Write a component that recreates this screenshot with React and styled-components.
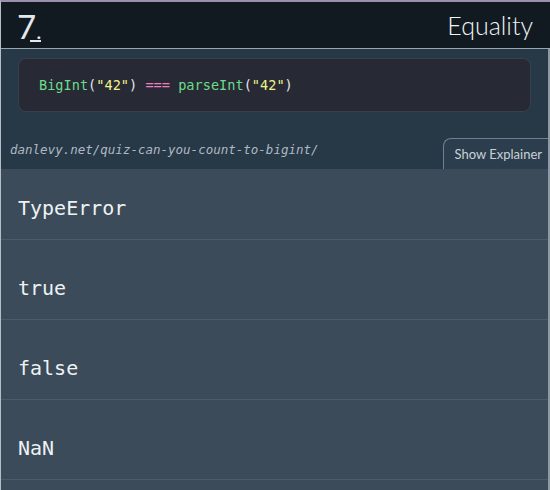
import React from 'react'
import styled, { createGlobalStyle } from 'styled-components'

const GlobalStyle = createGlobalStyle`
    html, body {
        margin: 0;
        padding: 0;
        background: #3b4b59;
    }
    * { box-sizing: border-box; }
`

const Page = styled.div`
    width: 550px;
    height: 490px;
    overflow: hidden;
    border-top: 2px solid #9b8fb0;
    border-left: 1px solid #b6bec4;
    display: flex;
    flex-direction: column;
`

const Header = styled.header`
    height: 47px;
    background: #121a21;
    border-bottom: 1px solid #9aa5ad;
    display: flex;
    align-items: center;
    justify-content: space-between;
    padding: 0 17px 0 16px;
    font-family: Lato, "Noto Sans", sans-serif;
    color: #e3e8ec;
`

const Logo = styled.div`
    font-size: 33px;
    font-weight: 400;
    line-height: 1;
    padding-top: 3px;
`

const Dot = styled.span`
    display: inline-block;
    font-size: 22px;
    line-height: 0.75;
    padding-left: 6px;
    margin-left: -6px;
    border-bottom: 2px solid #e3e8ec;
`

const Title = styled.h1`
    margin: 0;
    font-size: 25px;
    font-weight: 300;
    color: #f0f3f5;
`

const Body = styled.div`
    flex: 1;
    display: flex;
    flex-direction: column;
    border-right: 2px solid #8d99a3;
`

const Question = styled.div`
    background: #273847;
    padding: 9px 17px 0 17px;
`

const CodeBlock = styled.pre`
    margin: 0;
    height: 54px;
    background: #272934;
    border: 1px solid #384050;
    border-radius: 8px;
    padding: 0 20px;
    display: flex;
    align-items: center;
    font-family: "DejaVu Sans Mono", monospace;
    font-size: 13.6px;
    color: #e6e6ea;
`

const Code = styled.code`
    font-family: inherit;
    white-space: pre;
`

const Tok = styled.span`
    color: ${p => p.$c};
`

const LinkRow = styled.div`
    height: 57px;
    display: flex;
    align-items: flex-end;
    justify-content: space-between;
    margin: 0 -17px 0 -8px;
`

const Url = styled.span`
    font-family: "DejaVu Sans Mono", monospace;
    font-style: italic;
    font-size: 12.5px;
    color: #aeb8c2;
    padding-bottom: 12px;
`

const Tab = styled.button`
    height: 31px;
    padding: 0 6px 0 10px;
    border: 1px solid #6f808e;
    border-bottom: none;
    border-right: none;
    border-radius: 8px 0 0 0;
    background: #2c3e4d;
    color: #c9d1d7;
    font-family: Lato, "Noto Sans", sans-serif;
    font-size: 13px;
    cursor: pointer;
`

const Answers = styled.ul`
    list-style: none;
    margin: 0;
    padding: 0;
    background: #3b4b59;
    flex: 1;
`

const Answer = styled.li`
    height: ${p => (p.$first ? 71 : 80)}px;
    padding-top: ${p => (p.$first ? 8 : 16)}px;
    border-bottom: 1px solid #4c5d6a;
    display: flex;
    align-items: center;
    padding-left: 17px;
    font-family: "DejaVu Sans Mono", monospace;
    font-size: 20px;
    color: #eef2f4;
`

const answers = ['TypeError', 'true', 'false', 'NaN']

export default function App() {
    return (
        <Page>
            <GlobalStyle />
            <Header>
                <Logo>7<Dot>.</Dot></Logo>
                <Title>Equality</Title>
            </Header>
            <Body>
                <Question>
                    <CodeBlock>
                        <Code>
                            <Tok $c="#6bdc8b">BigInt</Tok>(<Tok $c="#f0f28a">"42"</Tok>){' '}
                            <Tok $c="#f07cc4">===</Tok>{' '}
                            <Tok $c="#6bdc8b">parseInt</Tok>(<Tok $c="#f0f28a">"42"</Tok>)
                        </Code>
                    </CodeBlock>
                    <LinkRow>
                        <Url>danlevy.net/quiz-can-you-count-to-bigint/</Url>
                        <Tab>Show Explainer</Tab>
                    </LinkRow>
                </Question>
                <Answers>
                    {answers.map((a, i) => (
                        <Answer key={a} $first={i === 0}>{a}</Answer>
                    ))}
                </Answers>
            </Body>
        </Page>
    )
}
